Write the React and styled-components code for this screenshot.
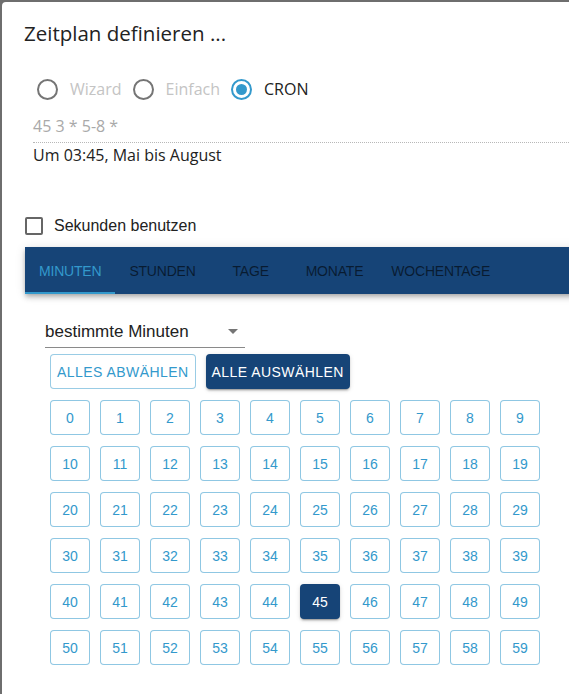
import React, { useState } from "react";
import styled, { createGlobalStyle, css } from "styled-components";

const PRIMARY = "#164477";
const SECONDARY = "#3399cc";
const UI_FONT = `"Liberation Sans", Arial, sans-serif`;

const GlobalStyle = createGlobalStyle`
  html, body {
    margin: 0;
    padding: 0;
    height: 100%;
    overflow: hidden;
    background: #6e6e6e;
  }
  body {
    padding: 2px 0 0 2px;
    box-sizing: border-box;
  }
  * { box-sizing: border-box; }
`;

const Dialog = styled.div`
  width: calc(100% + 20px);
  min-height: 720px;
  background: #fff;
  border-radius: 4px 0 0 0;
  font-family: "Open Sans", "Liberation Sans", sans-serif;
  color: rgba(0, 0, 0, 0.87);
`;

const Title = styled.h2`
  margin: 0;
  padding: 17px 22px 0;
  font-family: "Open Sans", sans-serif;
  font-size: 20.5px;
  font-weight: 400;
  line-height: 29px;
  color: #222;
`;

const Content = styled.div`
  padding: 20px 0 0 23px;
`;

const RadioRow = styled.div`
  display: flex;
  align-items: center;
  height: 42px;
  padding-left: 12px;
`;

const RadioOption = styled.label`
  display: flex;
  align-items: center;
  gap: 12px;
  margin-right: 11px;
  font-size: 16px;
  color: ${p => (p.$disabled ? "#c4c4c4" : "#222")};
`;

const RadioCircle = styled.span`
  position: relative;
  width: 21px;
  height: 21px;
  border-radius: 50%;
  border: 2px solid ${p => (p.$checked ? SECONDARY : "#757575")};
  ${p =>
    p.$checked &&
    css`
      &::after {
        content: "";
        position: absolute;
        inset: 3px;
        border-radius: 50%;
        background: ${SECONDARY};
      }
    `}
`;

const CronBox = styled.div`
  margin: 5px 0 0 8px;
`;

const CronInput = styled.div`
  font-size: 16px;
  line-height: 22px;
  color: #a9a9a9;
  padding-bottom: 5px;
  border-bottom: 1px dotted #b8b8b8;
`;

const CronText = styled.div`
  font-size: 16px;
  line-height: 22px;
  color: #222;
  padding-top: 1px;
`;

const CheckRow = styled.label`
  display: flex;
  align-items: center;
  gap: 11px;
  margin-top: 51px;
  font-family: ${UI_FONT};
  font-size: 16px;
  color: #222;
`;

const CheckBox = styled.span`
  width: 18px;
  height: 18px;
  border: 2px solid #666;
  border-radius: 2px;
`;

const TabBar = styled.div`
  display: flex;
  height: 47px;
  margin-top: 12px;
  background: ${PRIMARY};
  box-shadow: 0 2px 4px -1px rgba(0, 0, 0, 0.2), 0 4px 5px 0 rgba(0, 0, 0, 0.14),
    0 1px 10px 0 rgba(0, 0, 0, 0.12);
`;

const Tab = styled.div`
  position: relative;
  display: flex;
  align-items: center;
  justify-content: center;
  min-width: 82px;
  padding: 0 14px;
  font-family: ${UI_FONT};
  font-size: 14px;
  font-weight: 400;
  letter-spacing: -0.2px;
  text-transform: uppercase;
  color: ${p => (p.$active ? SECONDARY : "rgba(0, 0, 0, 0.6)")};
  ${p =>
    p.$active &&
    css`
      &::after {
        content: "";
        position: absolute;
        left: 0;
        right: 0;
        bottom: 0;
        height: 2px;
        background: ${SECONDARY};
      }
    `}
`;

const Panel = styled.div`
  padding: 22px 0 0 20px;
  font-family: ${UI_FONT};
`;

const Select = styled.div`
  display: flex;
  align-items: center;
  justify-content: space-between;
  width: 200px;
  height: 32px;
  padding-right: 7px;
  border-bottom: 1px solid #8a8a8a;
  font-size: 17px;
  color: #222;
`;

const Arrow = styled.span`
  width: 0;
  height: 0;
  border-left: 5px solid transparent;
  border-right: 5px solid transparent;
  border-top: 5px solid #757575;
`;

const ButtonRow = styled.div`
  display: flex;
  gap: 10px;
  margin: 6px 0 0 5px;
`;

const Button = styled.button`
  height: 35px;
  padding: 0 6px;
  border-radius: 4px;
  font-family: ${UI_FONT};
  font-size: 14px;
  letter-spacing: 0.45px;
  text-transform: uppercase;
  cursor: pointer;
  ${p =>
    p.$filled
      ? css`
          border: none;
          background: ${PRIMARY};
          color: #fff;
          box-shadow: 0 3px 1px -2px rgba(0, 0, 0, 0.2), 0 2px 2px 0 rgba(0, 0, 0, 0.14),
            0 1px 5px 0 rgba(0, 0, 0, 0.12);
        `
      : css`
          border: 1px solid rgba(51, 153, 204, 0.5);
          background: #fff;
          color: ${SECONDARY};
        `}
`;

const Grid = styled.div`
  display: grid;
  grid-template-columns: repeat(10, 40px);
  column-gap: 10px;
  row-gap: 11px;
  margin: 11px 0 0 5px;
`;

const Cell = styled.button`
  width: 40px;
  height: 35px;
  padding: 0;
  border-radius: 4px;
  font-family: ${UI_FONT};
  font-size: 14px;
  cursor: pointer;
  ${p =>
    p.$selected
      ? css`
          border: none;
          background: ${PRIMARY};
          color: #fff;
          box-shadow: 0 3px 1px -2px rgba(0, 0, 0, 0.2), 0 2px 2px 0 rgba(0, 0, 0, 0.14),
            0 1px 5px 0 rgba(0, 0, 0, 0.12);
        `
      : css`
          border: 1px solid rgba(51, 153, 204, 0.55);
          background: #fff;
          color: ${SECONDARY};
        `}
`;

const tabs = ["Minuten", "Stunden", "Tage", "Monate", "Wochentage"];
const modes = ["Wizard", "Einfach", "CRON"];

export default function App() {
  const [selected] = useState([45]);
  return (
    <>
      <GlobalStyle />
      <Dialog>
        <Title>Zeitplan definieren ...</Title>
        <Content>
          <RadioRow>
            {modes.map(m => (
              <RadioOption key={m} $disabled={m !== "CRON"}>
                <RadioCircle $checked={m === "CRON"} />
                {m}
              </RadioOption>
            ))}
          </RadioRow>
          <CronBox>
            <CronInput>45 3 * 5-8 *</CronInput>
            <CronText>Um 03:45, Mai bis August</CronText>
          </CronBox>
          <CheckRow>
            <CheckBox />
            Sekunden benutzen
          </CheckRow>
          <TabBar>
            {tabs.map((t, i) => (
              <Tab key={t} $active={i === 0}>
                {t}
              </Tab>
            ))}
          </TabBar>
          <Panel>
            <Select>
              bestimmte Minuten
              <Arrow />
            </Select>
            <ButtonRow>
              <Button>Alles abwählen</Button>
              <Button $filled>Alle auswählen</Button>
            </ButtonRow>
            <Grid>
              {Array.from({ length: 60 }, (_, n) => (
                <Cell key={n} $selected={selected.includes(n)}>
                  {n}
                </Cell>
              ))}
            </Grid>
          </Panel>
        </Content>
      </Dialog>
    </>
  );
}
